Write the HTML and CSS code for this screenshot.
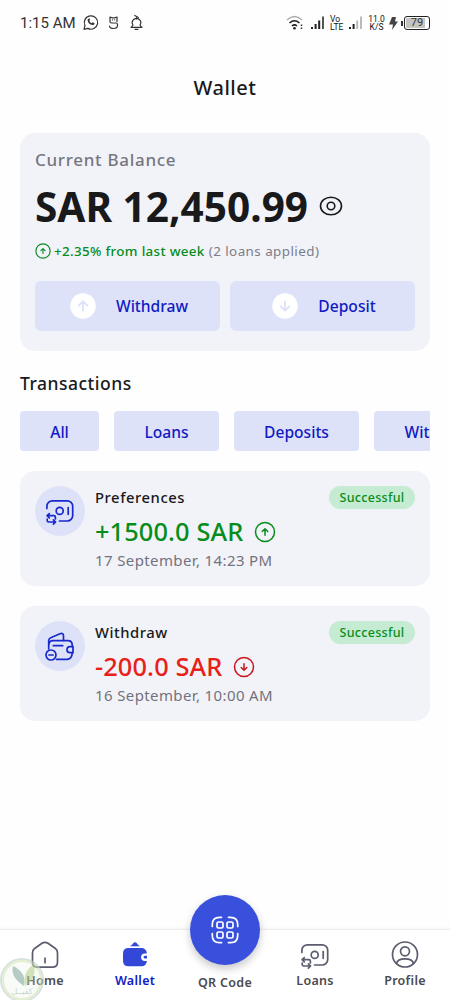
FILE: index.html
```html
<!DOCTYPE html>
<html lang="en">
<head>
<meta charset="utf-8">
<title>Wallet</title>
<link rel="stylesheet" href="styles.css">
</head>
<body>
<svg class="defs" aria-hidden="true">
  <symbol id="loan" viewBox="0 0 30 30">
    <path d="M1.900 12.500V10.300a5.500 5.500 0 0 1 5.500-5.500H22.200a5.500 5.500 0 0 1 5.500 5.500V19.500a5.500 5.500 0 0 1-5.500 5.500H14.500"/>
    <circle cx="14.700" cy="14.900" r="3.500"/><path d="M23.200 11.500v6.800"/>
    <path d="M2.200 19.700h6.600q1.600 0 1.600 1.600v1.600M4.300 17.600l-2.200 2.100 2.200 2.100M2.200 23v1.400q0 1.600 1.600 1.600h6.600M8.400 23.900l2.200 2.100-2.200 2.100"/>
  </symbol>
  <symbol id="up" viewBox="0 0 24 24"><circle cx="12" cy="12" r="9.500"/><path d="M12 15.300V9M9.200 11.500L12 8.700l2.800 2.800"/></symbol>
  <symbol id="down" viewBox="0 0 24 24"><circle cx="12" cy="12" r="9.500"/><path d="M12 8.700V15M9.200 12.500l2.800 2.800 2.800-2.800"/></symbol>
</svg>
<div class="screen">
  <header class="status">
    <span class="time">1:15 AM</span>
    <svg class="line s-left" width="62" height="18" viewBox="0 0 62 18">
      <path d="M2 15.300l1-3.800A6.700 6.700 0 1 1 5.800 14.400z"/><path d="M5.700 5.200c-.5 3.500 3 6.500 6.300 5.500l.6-1.500-1.900-1-1 1C8.500 8.700 7.700 8 7.300 6.700l.8-.8L7.300 4.300z" fill="currentColor" stroke="none"/>
      <path d="M28 7.500V3l2 .8h3l2-.8v4.500M30.500 5.800v.2M32.700 5.800v.2M28 7.500q0 1.500 1.500 1.500h4.500q1.500 0 1.500 1.500v1q0 3-4 3t-4-2.500"/>
      <path d="M49 13.300h11M51 11a4.200 4.200 0 1 1 7 0l1.700 2.300M51 11l-1.700 2.300M54.500 5V3.500M52.800 1.500l3.500 2M53 15.300h3"/>
    </svg>
    <div class="s-right">
      <svg width="18" height="16" viewBox="0 0 18 16" fill="none"><path d="M1 5q7.500-7 15 0" stroke="#aaa" stroke-width="1.400"/><path d="M3.500 8q5-4.500 10 0M6 11q2.500-2.300 5 0" stroke="#222" stroke-width="1.600"/><circle cx="8.500" cy="13.300" r="1.300" fill="#222"/><path d="M15.500 9.500v1.500M15.500 12.500v1.500" stroke="#333" stroke-width="1.500"/></svg>
      <svg class="bars" width="14" height="14" viewBox="0 0 14 14"><path d="M0 11h2v2H0zM3.600 8h2v5h-2zM7.200 4.500h2V13h-2z" fill="#222"/><path d="M11 .5h2V13h-2z" fill="#555"/></svg>
      <span class="mini lte">Vo<br>LTE</span>
      <svg class="bars2" width="14" height="14" viewBox="0 0 14 14"><path d="M0 11h2v2H0zM3.600 8h2v5h-2z" fill="#222"/><path d="M7.200 4.500h2V13h-2zM11 .5h2V13h-2z" fill="#bbb"/></svg>
      <span class="mini kbs">11.0<br>K/S</span>
      <svg class="bolt" width="9" height="13" viewBox="0 0 9 13"><path d="M3 0h4L6 4.500h3L3 13l1-5.500H0z" fill="#444"/></svg>
      <i class="nub"></i><span class="batt">79</span>
    </div>
  </header>

  <h1 class="title">Wallet</h1>

  <main class="content">
    <section class="balance">
      <p class="cap">Current Balance</p>
      <div class="amount"><span>SAR 12,450.99</span>
        <svg class="line" width="24" height="24" viewBox="0 0 24 24"><path d="M1.500 12C1.500 7 6.500 3.200 12 3.200S22.500 7 22.500 12 17.500 20.800 12 20.800 1.500 17 1.500 12z"/><circle cx="12" cy="12" r="3.800"/></svg>
      </div>
      <p class="change"><svg class="line" width="18" height="18"><use href="#up"/></svg><b>+2.35% from last week</b><span>(2 loans applied)</span></p>
      <div class="actions">
        <button class="action"><svg width="26" height="26" viewBox="0 0 26 26"><circle cx="13" cy="13" r="12.700" fill="#fff"/><path class="arrow" d="M13 17.500V8.500M8.800 12.500L13 8.300l4.200 4.200"/></svg><span>Withdraw</span></button>
        <button class="action"><svg width="26" height="26" viewBox="0 0 26 26"><circle cx="13" cy="13" r="12.700" fill="#fff"/><path class="arrow" d="M13 8.500v9M8.800 13.500l4.200 4.200 4.200-4.200"/></svg><span>Deposit</span></button>
      </div>
    </section>

    <h2 class="heading">Transactions</h2>
    <div class="chips"><span class="chip all">All</span><span class="chip loans">Loans</span><span class="chip deposits">Deposits</span><span class="chip wd">Withdraws</span></div>

    <article class="tx">
      <div class="avatar"><svg class="line" width="30" height="30"><use href="#loan"/></svg></div>
      <div class="info">
        <p class="name">Preferences</p>
        <p class="sum plus"><span>+1500.0 SAR</span><svg class="line" width="24" height="24"><use href="#up"/></svg></p>
        <p class="date">17 September, 14:23 PM</p>
      </div>
      <span class="badge">Successful</span>
    </article>
    <article class="tx">
      <div class="avatar"><svg class="line" width="30" height="30" viewBox="0 0 30 30">
        <path d="M3.700 18V13.700a4 4 0 0 1 4-4H23q4 0 4.300 4.500v1.300M27.300 21.500q-.3 6.800-5.300 6.800H11.500"/>
        <path d="M28 15.700h-3a3 3 0 0 0 0 6h3zM8.300 14.700h9.400M3.700 13V9.500q0-2 2-2.800L15 2.800q3.500-1.300 3.500 2V9.500"/>
        <circle cx="6" cy="24" r="5"/><path d="M3.900 24h4.200"/></svg></div>
      <div class="info">
        <p class="name">Withdraw</p>
        <p class="sum minus"><span>-200.0 SAR</span><svg class="line" width="24" height="24"><use href="#down"/></svg></p>
        <p class="date">16 September, 10:00 AM</p>
      </div>
      <span class="badge">Successful</span>
    </article>
  </main>

  <nav class="nav">
    <a class="item"><svg class="line" width="30" height="30" viewBox="0 0 30 30"><path d="M2.500 13Q2.500 10 4.600 8.500L12 3.300q3-2 6 0l7.400 5.200q2.100 1.500 2.100 4.500V22q0 5.200-5.200 5.200H7.700Q2.500 27.200 2.500 22zM15 18.200v4.500"/></svg><span>Home</span></a>
    <a class="item active"><svg width="30" height="30" viewBox="0 0 30 30" fill="#3347d8"><path d="M9.500 6.200q2.300-.3 3.500-2.700 2-2.500 4 0 1.200 2.400 3.500 2.700zM8.500 8H21.500q4.700 0 5.400 5.500H24.800a3.700 3.700 0 0 0 0 7.400H26.900q-.7 5.300-5.400 5.300H8.500Q3 26.200 3 20.700v-7.200Q3 8 8.500 8zM25 15.800h2v2.800h-2a1.400 1.400 0 0 1 0-2.800z"/></svg><span>Wallet</span></a>
    <a class="item qr"><i class="fab"><svg class="line" width="30" height="30" viewBox="0 0 30 30">
      <path d="M2.300 11.500V9.500Q2.300 2.300 9.500 2.300H11.500M18.500 2.300h2Q27.700 2.300 27.700 9.500V11.500M27.700 18.500v2q0 7.200-7.200 7.200h-2M11.500 27.700H9.500Q2.300 27.700 2.300 20.500V18.500"/>
      <rect x="7" y="7" width="6" height="6" rx="1.500"/><rect x="17" y="7" width="6" height="6" rx="1.500"/><rect x="7" y="17" width="6" height="6" rx="1.500"/><rect x="17" y="17" width="6" height="6" rx="1.500"/></svg></i><span>QR Code</span></a>
    <a class="item"><svg class="line" width="30" height="30"><use href="#loan"/></svg><span>Loans</span></a>
    <a class="item"><svg class="line" width="30" height="30" viewBox="0 0 30 30"><circle cx="15" cy="14.500" r="12.500"/><circle cx="15" cy="11.300" r="4.500"/><path d="M6.500 23.500q1-4.700 8.500-4.700t8.500 4.700"/></svg><span>Profile</span></a>
  </nav>

  <svg class="mark" width="46" height="48" viewBox="0 0 46 48">
    <circle cx="22" cy="24" r="21" fill="#e9f0e6" fill-opacity=".4" stroke="#bccfcf" stroke-width="2"/>
    <circle cx="22" cy="24" r="19" fill="none" stroke="#d3e4ae" stroke-width="2"/>
    <path d="M13 10q-3 11 11 20 3-13-11-20z" fill="#85aaa0"/><path d="M25 30q-3-14 9-22 3 15-9 22z" fill="#b5d08c"/>
    <text x="22" y="38" text-anchor="middle">كفيــل</text>
  </svg>
</div>
</body>
</html>
```
FILE: styles.css
```css
* { box-sizing: border-box; }
body { margin: 0; font-family: "Noto Sans", sans-serif; color: #19191b; background: #fefefe; }
h1, h2, p { margin: 0; font-weight: 500; }
svg { flex: none; display: block; }
span { white-space: nowrap; }
.defs { position: absolute; width: 0; height: 0; }
.line { fill: none; stroke: currentColor; stroke-width: 1.7; stroke-linecap: round; stroke-linejoin: round; }
.screen { position: relative; width: 450px; height: 1000px; overflow: hidden; display: flex; flex-direction: column; }

.status { height: 46px; padding: 0 20px; display: flex; align-items: center; font-family: Roboto, sans-serif; color: #333; }
.time { width: 62px; font-size: 15px; }
.s-left { stroke-width: 1.2; }
.s-right { display: flex; align-items: center; margin-left: auto; }
.bars { margin-left: 7px; }
.bars2 { margin-left: 5px; }
.mini { font-size: 8.5px; line-height: 8px; font-weight: 400; color: #111; text-align: center; }
.lte { margin-left: 5px; text-align: left; width: 14px; }
.kbs { margin-left: 5px; width: 17px; }
.bolt { margin-left: 4px; }
.nub { width: 2px; height: 5px; background: #333; margin: 0 1px 0 3px; }
.batt { width: 26px; height: 14px; border: 1.5px solid #222; border-radius: 3px; background: linear-gradient(90deg, #c4c4c4 84%, #fff 84%); background-clip: content-box; padding: 1px; font-size: 11px; line-height: 10px; text-align: center; font-weight: 400; }

.title { height: 87px; padding-top: 27px; font-size: 20px; line-height: 30px; text-align: center; letter-spacing: .5px; }
.content { padding: 0 20px; }
.balance { height: 218px; padding: 15px; border-radius: 15px; background: #f2f3f8; }
.cap { font-size: 17px; line-height: 24px; color: #767682; letter-spacing: .7px; }
.amount { display: flex; align-items: center; gap: 11px; height: 68px; font-size: 40.6px; font-weight: 700; line-height: 66px; }
.amount span { margin-top: 2px; }
.amount svg { stroke-width: 1.6; }
.change { display: flex; align-items: center; height: 22px; font-size: 13.4px; letter-spacing: .33px; margin-left: -1px; color: #048c1d; }
.change svg { stroke-width: 1.5; }
.change b { font-weight: 500; margin: 0 4px 0 2px; }
.change span { font-weight: 400; color: #7c7c88; letter-spacing: .45px; }
.actions { display: grid; grid-template-columns: 1fr 1fr; gap: 10px; margin-top: 19px; }
.action { height: 50px; padding: 0 0 0 3px; border: 0; border-radius: 6px; background: #dee2f8; color: #111ac4; font: 500 15.6px "Noto Sans", sans-serif; display: flex; align-items: center; justify-content: center; gap: 20px; }
.arrow { fill: none; stroke: #dee2f8; stroke-width: 1.8; stroke-linecap: round; stroke-linejoin: round; }
.heading { height: 60px; padding-top: 18px; line-height: 28px; font-size: 17.5px; letter-spacing: .5px; }
.chips { display: flex; gap: 15px; overflow: hidden; height: 40px; }
.chip { flex: none; border-radius: 4px; background: #dee2f8; color: #111ac4; font-size: 15.6px; font-weight: 500; line-height: 42px; text-align: center; }
.all { width: 79px; }
.loans { width: 105px; }
.deposits { width: 125px; }
.wd { width: 134px; text-align: left; padding-left: 30.5px; }
.tx { display: flex; align-items: flex-start; height: 115px; margin-top: 20px; padding: 15px; border-radius: 15px; background: #f2f3f8; }
.avatar { width: 50px; height: 50px; border-radius: 50%; background: #dee2f8; color: #1728cc; display: grid; place-items: center; }
.info { flex: 1; margin-left: 10px; }
.name { font-size: 14.8px; line-height: 22px; letter-spacing: .55px; }
.sum { display: flex; align-items: center; gap: 10px; height: 47px; font-size: 25.4px; line-height: 47px; letter-spacing: .1px; }
.plus { color: #078d1c; }
.minus { color: #e8201a; }
.minus svg { color: #c9151c; }
.sum svg { stroke-width: 1.5; }
.date { font-size: 15px; line-height: 20px; margin-top: -5px; font-weight: 400; color: #72727e; letter-spacing: .38px; }
.badge { height: 23px; width: 86px; border-radius: 12px; background: #c5ecd2; color: #078d1c; font-size: 12.5px; font-weight: 500; line-height: 23px; text-align: center; letter-spacing: .3px; }

.nav { position: absolute; left: 0; right: 0; bottom: 0; height: 71px; border-top: 1px solid #ededee; box-shadow: 0 -1px 3px #0000000a; background: #fff; display: grid; grid-template-columns: repeat(5, 1fr); }
.item { display: flex; flex-direction: column; align-items: center; padding-top: 10px; color: #5b5c6e; }
.item > span { font-size: 12.5px; line-height: 18px; margin-top: 2px; font-weight: 600; color: #4b4b50; letter-spacing: .3px; }
.item.active > span { color: #111ac4; }
.item.qr { padding: 0; }
.fab { width: 70px; height: 70px; margin-top: -35px; border-radius: 50%; background: #3950dc; color: #fff; display: grid; place-items: center; box-shadow: 0 4px 8px #00000038; }
.item.qr > span { margin-top: 9px; }
.mark { position: absolute; left: 0; bottom: -4px; opacity: .6; }
.mark text { font: 8px "DejaVu Sans", sans-serif; fill: #a0b8b0; }
```
